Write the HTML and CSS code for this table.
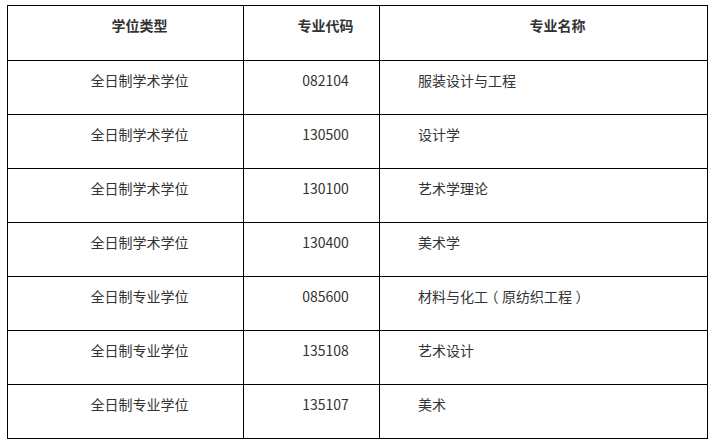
FILE: index.html
```html
<!DOCTYPE html>
<html lang="zh-CN">
<head>
<meta charset="utf-8">
<title>专业目录</title>
<link rel="stylesheet" href="styles.css">
</head>
<body>
<table class="major-table">
  <colgroup>
    <col class="c1">
    <col class="c2">
    <col class="c3">
  </colgroup>
  <thead>
    <tr>
      <th>学位类型</th>
      <th>专业代码</th>
      <th>专业名称</th>
    </tr>
  </thead>
  <tbody>
    <tr><td class="center">全日制学术学位</td><td class="center">082104</td><td>服装设计与工程</td></tr>
    <tr><td class="center">全日制学术学位</td><td class="center">130500</td><td>设计学</td></tr>
    <tr><td class="center">全日制学术学位</td><td class="center">130100</td><td>艺术学理论</td></tr>
    <tr><td class="center">全日制学术学位</td><td class="center">130400</td><td>美术学</td></tr>
    <tr><td class="center">全日制专业学位</td><td class="center">085600</td><td>材料与化工<span class="paren">（</span>原纺织工程<span class="paren">）</span></td></tr>
    <tr><td class="center">全日制专业学位</td><td class="center">135108</td><td>艺术设计</td></tr>
    <tr><td class="center">全日制专业学位</td><td class="center">135107</td><td>美术</td></tr>
  </tbody>
</table>
</body>
</html>
```

FILE: styles.css
```css
html, body {
  margin: 0;
  padding: 0;
  background: #ffffff;
}

body {
  font-family: "Noto Sans CJK SC", "Noto Sans", sans-serif;
  font-size: 14px;
  color: #333333;
}

.major-table {
  margin: 5px 0 0 7px;
  width: 700px;
  table-layout: fixed;
  border-collapse: collapse;
}

.c1 { width: 236px; }
.c2 { width: 136px; }
.c3 { width: 328px; }

.major-table th,
.major-table td {
  border: 1px solid #000000;
  padding: 7px 10px 22px;
  line-height: 24px;
  vertical-align: top;
  text-indent: 28px;
  text-align: left;
  white-space: nowrap;
}

.major-table th {
  font-weight: bold;
  text-align: center;
  padding-bottom: 23px;
}

.major-table td.center {
  text-align: center;
}

.paren {
  display: inline-block;
  width: 14px;
  text-indent: 0;
  text-align: center;
  font-feature-settings: "halt" 1;
}
```
